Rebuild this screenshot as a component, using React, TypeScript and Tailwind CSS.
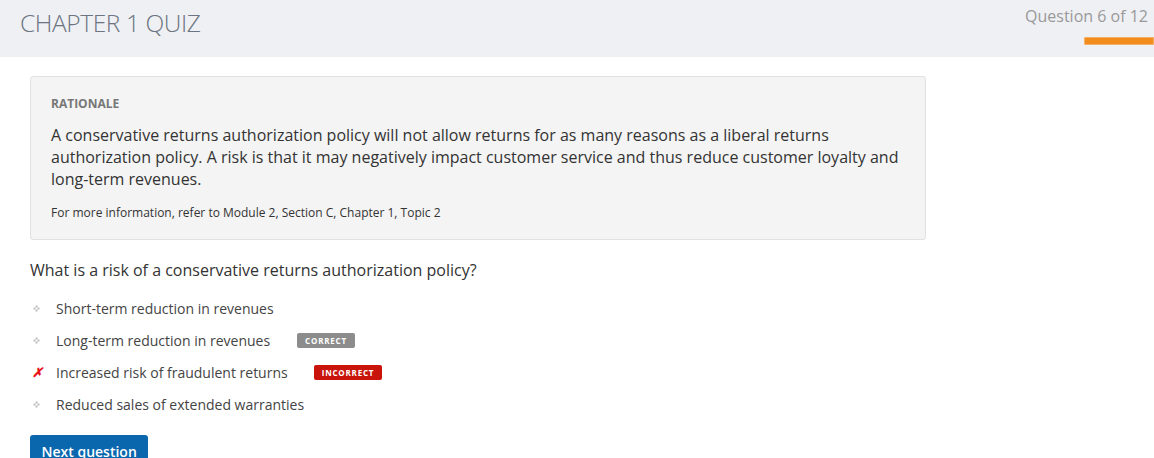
const options = [
    { text: 'Short-term reduction in revenues' },
    { text: 'Long-term reduction in revenues', badge: 'correct' },
    { text: 'Increased risk of fraudulent returns', badge: 'incorrect', picked: true },
    { text: 'Reduced sales of extended warranties' },
];

const Bullet = () => (
    <svg width="7" height="7" viewBox="0 0 7 7" className="text-[#bdbdbd]">
        <rect x="2.5" y="0.5" width="2" height="2" fill="currentColor" />
        <rect x="0.5" y="2.5" width="2" height="2" fill="currentColor" />
        <rect x="4.5" y="2.5" width="2" height="2" fill="currentColor" />
        <rect x="2.5" y="4.5" width="2" height="2" fill="currentColor" />
    </svg>
);

const App = () => {
    return (
        <div className="min-h-[458px] bg-white font-['Open_Sans',sans-serif] text-[#333]">
            <div className="flex h-[57px] items-start justify-between bg-[#eff0f4]">
                <h1 className="pl-5 pt-[5px] text-[24.5px] font-light tracking-[-0.4px] text-[#6b7480]">CHAPTER 1 QUIZ</h1>
                <div className="flex flex-col items-end pt-[4px]">
                    <p className="pr-[6px] text-[16px] text-[#999]">Question 6 of 12</p>
                    <div className="mt-[9px] h-[8px] w-[70px] rounded-l-[1px] border border-[#f5b066] bg-[#f28c1c]" />
                </div>
            </div>

            <div className="px-[30px] pt-[19px]">
                <div className="w-[896px] rounded-[3px] border border-[#e1e1e1] bg-[#f4f4f4] px-5 pb-[17px] pt-[18px]">
                    <p className="text-[12px] font-bold text-[#777]">RATIONALE</p>
                    <p className="mt-[11px] text-[16px] leading-[22px] text-[#333]">
                        A conservative returns authorization policy will not allow returns for as many reasons as a liberal returns
                        authorization policy. A risk is that it may negatively impact customer service and thus reduce customer loyalty and
                        long-term revenues.
                    </p>
                    <p className="mt-[14px] text-[12px] text-[#333]">
                        For more information, refer to Module 2, Section C, Chapter 1, Topic 2
                    </p>
                </div>

                <p className="mt-[18px] text-[16px] text-[#333]">What is a risk of a conservative returns authorization policy?</p>

                <ul className="mt-[10px] flex flex-col">
                    {options.map((o) => (
                        <li key={o.text} className="flex h-[32px] items-center text-[14px] text-[#444]">
                            <span className="flex w-[26px] items-center pl-[2px]">
                                {o.picked ? (
                                    <span className="text-[13px] font-bold italic leading-none text-[#e8141a]">✗</span>
                                ) : (
                                    <span className="pl-[1px]"><Bullet /></span>
                                )}
                            </span>
                            <span>{o.text}</span>
                            {o.badge === 'correct' && (
                                <span className="ml-[27px] inline-block rounded-[2px] bg-[#8c8c8c] px-[8px] py-[3px] text-[8px] font-bold leading-[9px] tracking-[0.8px] text-white">
                                    CORRECT
                                </span>
                            )}
                            {o.badge === 'incorrect' && (
                                <span className="ml-[26px] inline-block rounded-[2px] bg-[#c8140a] px-[8px] py-[3px] text-[8px] font-bold leading-[9px] tracking-[0.8px] text-white">
                                    INCORRECT
                                </span>
                            )}
                        </li>
                    ))}
                </ul>

                <button className="mt-[15px] rounded-[3px] bg-[#0a67ae] px-[11.5px] py-[6px] text-[14px] font-semibold text-white">
                    Next question
                </button>
            </div>
        </div>
    );
};

export default App;
